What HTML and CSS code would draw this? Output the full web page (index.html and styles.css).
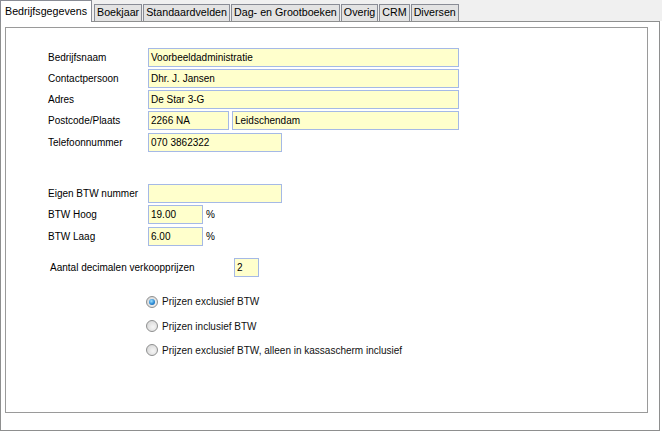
FILE: index.html
```html
<!DOCTYPE html>
<html>
<head>
<meta charset="utf-8">
<link rel="stylesheet" href="styles.css">
</head>
<body>
<div class="window">
  <div class="tabs">
    <div class="tab active">Bedrijfsgegevens</div>
    <div class="tab">Boekjaar</div>
    <div class="tab">Standaardvelden</div>
    <div class="tab">Dag- en Grootboeken</div>
    <div class="tab">Overig</div>
    <div class="tab">CRM</div>
    <div class="tab">Diversen</div>
  </div>
  <div class="panel">
    <div class="frame">
      <div class="group first">
        <div class="row"><span class="label">Bedrijfsnaam</span><span class="field w-full">Voorbeeldadministratie</span></div>
        <div class="row"><span class="label">Contactpersoon</span><span class="field w-full">Dhr. J. Jansen</span></div>
        <div class="row"><span class="label">Adres</span><span class="field w-full">De Star 3-G</span></div>
        <div class="row"><span class="label">Postcode/Plaats</span><span class="field w-pc">2266 NA</span><span class="field w-city">Leidschendam</span></div>
        <div class="row"><span class="label">Telefoonnummer</span><span class="field w-mid">070 3862322</span></div>
      </div>
      <div class="group second">
        <div class="row"><span class="label">Eigen BTW nummer</span><span class="field w-mid"></span></div>
        <div class="row"><span class="label">BTW Hoog</span><span class="field w-pct">19.00</span><span class="unit">%</span></div>
        <div class="row"><span class="label">BTW Laag</span><span class="field w-pct">6.00</span><span class="unit">%</span></div>
      </div>
      <div class="row decimals"><span class="label wide">Aantal decimalen verkoopprijzen</span><span class="field w-dec">2</span></div>
      <div class="radios">
        <div class="radio-row"><span class="radio checked"></span><span>Prijzen exclusief BTW</span></div>
        <div class="radio-row"><span class="radio"></span><span>Prijzen inclusief BTW</span></div>
        <div class="radio-row"><span class="radio"></span><span>Prijzen exclusief BTW, alleen in kassascherm inclusief</span></div>
      </div>
    </div>
  </div>
</div>
</body>
</html>
```

FILE: styles.css
```css
html, body {
  margin: 0;
  padding: 0;
  background: #ffffff;
  font-family: "Liberation Sans", Arial, sans-serif;
  color: #000;
}

.window {
  width: 662px;
  height: 433px;
}

.tabs {
  display: flex;
  align-items: flex-end;
  height: 21px;
  background: #f0f0f0;
  gap: 1px;
  position: relative;
  z-index: 1;
}

.tab {
  box-sizing: border-box;
  height: 17px;
  padding: 0 2px;
  font-size: 10.7px;
  line-height: 15px;
  background: #e3e3e3;
  border: 1px solid #898c95;
  border-bottom: none;
  white-space: nowrap;
}

.tab.active {
  height: 22px;
  margin-bottom: -1px;
  padding: 0 4px;
  line-height: 21px;
  background: #ffffff;
  border-left-color: #898c95;
  margin-right: 1px;
}

.panel {
  box-sizing: border-box;
  width: 660px;
  height: 410px;
  border: 1px solid #8e8f8f;
  background: #ffffff;
  padding: 5px 0 0 4px;
}

.frame {
  box-sizing: border-box;
  width: 643px;
  height: 386px;
  border: 1px solid #9a9a9a;
  padding: 20px 0 0 42px;
  font-size: 10px;
}

.group {
  display: flex;
  flex-direction: column;
  gap: 2px;
}

.second {
  margin-top: 32px;
}

.row {
  display: flex;
  align-items: center;
  height: 19px;
}

.row + .row:last-child {
  margin-top: 1px;
}

.label {
  width: 100px;
  flex: none;
}

.label.wide {
  width: 184px;
  padding-left: 2px;
}

.field {
  box-sizing: border-box;
  height: 19px;
  border: 1px solid #a5b9e6;
  background: #ffffcc;
  padding: 0 2px;
  line-height: 17px;
  white-space: nowrap;
  flex: none;
}

.w-full { width: 311px; }
.w-pc { width: 81px; margin-right: 3px; }
.w-city { width: 227px; }
.w-mid { width: 134px; }
.w-pct { width: 55px; }
.w-dec { width: 25px; }

.unit {
  margin-left: 3px;
}

.decimals {
  margin-top: 12px;
  height: 19px;
}

.radios {
  margin-top: 12px;
  padding-left: 98px;
  display: flex;
  flex-direction: column;
}

.radio-row {
  display: flex;
  align-items: center;
  height: 24px;
  font-size: 10px;
  color: #111;
}

.radio-row:first-child {
  height: 25px;
}

.radio {
  box-sizing: border-box;
  width: 12px;
  height: 12px;
  border-radius: 50%;
  border: 1px solid #8e8f8f;
  background: radial-gradient(circle at 60% 60%, #f6f6f6 0%, #dcdcdc 70%, #cfcfcf 100%);
  margin-right: 4px;
  position: relative;
  flex: none;
}

.radio.checked::after {
  content: "";
  position: absolute;
  left: 2px;
  top: 2px;
  width: 6px;
  height: 6px;
  border-radius: 50%;
  background: radial-gradient(circle at 40% 35%, #9fe0ff 0%, #2a8ad4 55%, #0f4f98 100%);
}
```
